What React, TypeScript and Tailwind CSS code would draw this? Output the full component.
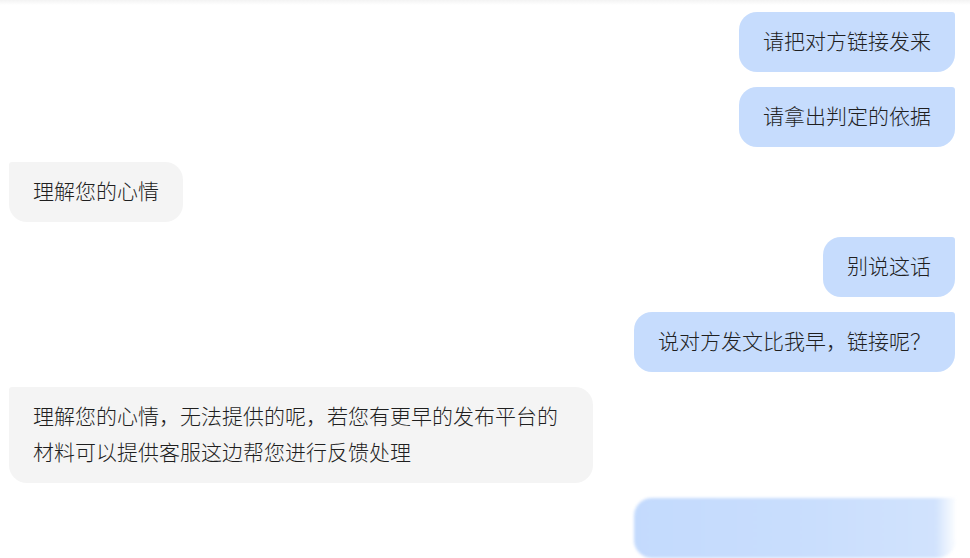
import React from 'react';

type Msg = { id: number; from: 'me' | 'agent'; text: string };

const messages: Msg[] = [
  { id: 1, from: 'me', text: '请把对方链接发来' },
  { id: 2, from: 'me', text: '请拿出判定的依据' },
  { id: 3, from: 'agent', text: '理解您的心情' },
  { id: 4, from: 'me', text: '别说这话' },
  { id: 5, from: 'me', text: '说对方发文比我早，链接呢？' },
  {
    id: 6,
    from: 'agent',
    text: '理解您的心情，无法提供的呢，若您有更早的发布平台的材料可以提供客服这边帮您进行反馈处理',
  },
];

const Bubble: React.FC<{ msg: Msg }> = ({ msg }) => {
  if (msg.from === 'me') {
    return (
      <div className="flex justify-end">
        <div className="max-w-[584px] rounded-[18px] rounded-tr-[3px] bg-[#c6dcfd] px-6 pt-[10px] pb-[14px] text-[21px] font-light leading-9 text-[#1f1f1f]">
          {msg.text}
        </div>
      </div>
    );
  }
  return (
    <div className="flex justify-start">
      <div className="max-w-[584px] rounded-[18px] rounded-tl-[3px] bg-[#f4f4f4] px-6 pt-[10px] pb-[14px] text-[21px] font-light leading-9 text-[#1f1f1f]">
        {msg.text}
      </div>
    </div>
  );
};

export default function App() {
  return (
    <div
      className="relative h-[558px] w-[970px] overflow-hidden bg-white"
      style={{ fontFamily: '"Noto Sans CJK SC", "Noto Sans", sans-serif' }}
    >
      {/* faint header shadow */}
      <div className="absolute inset-x-0 top-0 h-[5px] bg-gradient-to-b from-[#f3f3f3] to-white" />

      <div className="flex flex-col gap-[15px] pl-[9px] pr-[15px] pt-[12px]">
        {messages.map((m) => (
          <Bubble key={m.id} msg={m} />
        ))}

        {/* blurred pending message */}
        <div className="flex justify-end">
          <div className="relative h-[60px] w-[321px] overflow-hidden rounded-[18px] rounded-tr-[3px] bg-gradient-to-r from-[#c3dafd] via-[#c8ddfd] to-[#d2e3fd] blur-[1.5px]">
            <div className="absolute inset-y-0 right-0 w-[20px] bg-gradient-to-r from-transparent to-white/90" />
          </div>
        </div>

        <div className="flex justify-start pl-[6px]">
          <div className="h-[40px] w-[110px] rounded-[14px] bg-[#fafafa] blur-[2px]" />
        </div>
      </div>
    </div>
  );
}
